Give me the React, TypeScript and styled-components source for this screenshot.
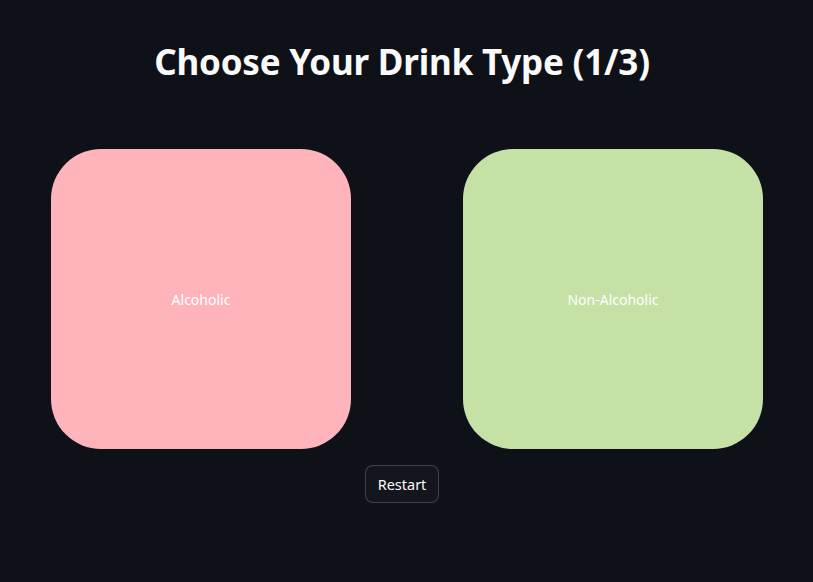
import React from "react";
import styled, { createGlobalStyle } from "styled-components";

const GlobalStyle = createGlobalStyle`
  html, body {
    margin: 0;
    padding: 0;
    background: #0e1117;
  }
  body {
    font-family: "Noto Sans", "Open Sans", sans-serif;
    color: #fafafa;
  }
`;

const Page = styled.main`
  width: 813px;
  height: 582px;
  box-sizing: border-box;
  padding: 36px 60px 0 51px;
  display: flex;
  flex-direction: column;
  align-items: center;
`;

const Title = styled.h1`
  margin: 0;
  font-size: 35px;
  font-weight: 700;
  line-height: 52px;
  letter-spacing: -0.2px;
  color: #fafafa;
  text-align: center;
`;

const Choices = styled.div`
  margin-top: 61px;
  width: 712px;
  align-self: flex-start;
  display: flex;
  justify-content: space-between;
`;

const Card = styled.button<{ $tone: string }>`
  width: 300px;
  height: 300px;
  border: none;
  border-radius: 50px;
  background: ${(p) => p.$tone};
  color: #ffffff;
  font-family: "Noto Sans", sans-serif;
  font-size: 14px;
  display: flex;
  align-items: center;
  justify-content: center;
  cursor: pointer;
`;

const RestartButton = styled.button`
  margin-top: 16px;
  height: 38px;
  padding: 0 12px;
  border: 1px solid rgba(250, 250, 250, 0.2);
  border-radius: 8px;
  background: #13161d;
  color: #fafafa;
  font-family: "Noto Sans", sans-serif;
  font-size: 14.5px;
  cursor: pointer;
`;

export default function App() {
  return (
    <>
      <GlobalStyle />
      <Page>
        <Title>Choose Your Drink Type (1/3)</Title>
        <Choices>
          <Card $tone="#ffb3ba">Alcoholic</Card>
          <Card $tone="#c5e1a5">Non-Alcoholic</Card>
        </Choices>
        <RestartButton>Restart</RestartButton>
      </Page>
    </>
  );
}
